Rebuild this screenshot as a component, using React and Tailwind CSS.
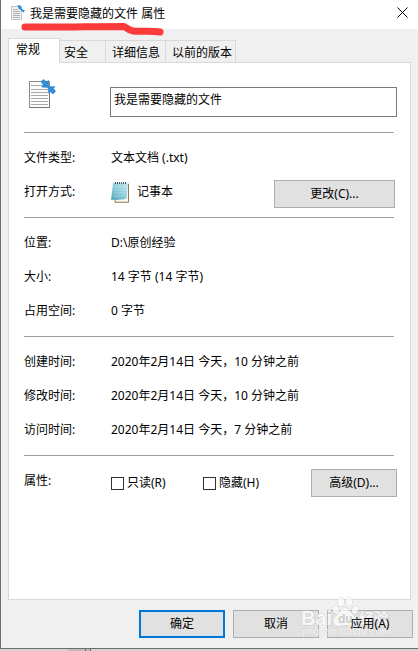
import React from 'react';

const FILE_NAME = '我是需要隐藏的文件';

const tabs = [
  { label: '安全', width: 'w-[46px] pl-1' },
  { label: '详细信息', width: 'w-[60px] pl-1.5' },
  { label: '以前的版本', width: 'w-[70px] pl-1.5' },
];

const sizeRows = [
  { label: '位置:', value: 'D:\\原创经验' },
  { label: '大小:', value: '14 字节 (14 字节)' },
  { label: '占用空间:', value: '0 字节' },
];

const timeRows = [
  { label: '创建时间:', value: '2020年2月14日 今天，10 分钟之前' },
  { label: '修改时间:', value: '2020年2月14日 今天，10 分钟之前' },
  { label: '访问时间:', value: '2020年2月14日 今天，7 分钟之前' },
];

function SmallFileIcon() {
  return (
    <svg className="w-3.5 h-[15px] mb-1" viewBox="0 0 14 15" fill="none" aria-hidden="true">
      <path d="M.5 1.500h10v13H.5z" fill="#f2f2f2" stroke="#c4c4c4" />
      <path d="M2 4.500h5M2 6.500h7M2 8.500h7M2 10.500h7M2 12.500h7" stroke="#a8b0b6" />
      <path d="M6.500 0L10 .8l.8 3.200L14 5.500 12.500 7.500 9.500 5 7.500 3.500z" fill="#2f8fdc" />
    </svg>
  );
}

function FileIcon({ className }) {
  return (
    <svg className={className} viewBox="0 0 28 30" fill="none" aria-hidden="true">
      <path d="M1.500 2.500h20v26h-20z" fill="#fbfbfb" stroke="#8b8b8b" />
      <path d="M21.500 12v16.500h-20" stroke="#777" />
      <path d="M3 6.500h12M3 10.500h17M3 13.500h17M3 16.500h17M3 19.500h17M3 22.500h17M3 25.500h17" stroke="#a9a9a9" />
      <path d="M13 2.500L15.500.5l3 2.200L20.500 1.500l.3 7-7-.4 1.500-2z" fill="#2f8fdc" stroke="#1f72b8" strokeWidth=".5" />
      <path d="M20 7.500l7 .3-1.500 1.700 2 3-2.500 2.500-2.500-2.200-1.800 1.500z" fill="#2f8fdc" stroke="#1f72b8" strokeWidth=".5" />
    </svg>
  );
}

function NotepadIcon() {
  return (
    <svg className="w-5 h-[22px]" viewBox="0 0 20 22" fill="none" aria-hidden="true">
      <defs>
        <linearGradient id="pad" x1="0" y1="1" x2="1" y2="0">
          <stop offset="0" stopColor="#4fa6bb" />
          <stop offset=".55" stopColor="#8fcfdd" />
          <stop offset="1" stopColor="#cdeaf0" />
        </linearGradient>
      </defs>
      <path d="M4 3h13.500v18.300H4z" fill="#f8f6f0" stroke="#927b55" />
      <path d="M2 2h15l-1.500 15.500c-3 1.500-5 .5-8 1.200-3 .6-5-.2-7.500 0C.8 13 1.500 8 2 2z" fill="url(#pad)" />
      <path d="M3 6h12M3 9h12M2 12h12.500M2 15h12" stroke="#fff" strokeOpacity=".25" />
      <path d="M4.500 3V1M6.500 3V1M8.500 3V1M10.500 3V1M12.500 3V1M14.500 3V1" stroke="#4c5a60" />
    </svg>
  );
}

function Rule() {
  return <hr className="h-px border-0 bg-[#a0a0a0] mr-[3px]" />;
}

function Row({ label, children }) {
  return (
    <div className="flex items-center h-[34px]">
      <div className="w-[87px] shrink-0">{label}</div>
      <div className="flex-1 flex items-center">{children}</div>
    </div>
  );
}

function Button({ className, children }) {
  return (
    <button type="button" className={`h-7 shrink-0 bg-[#e1e1e1] text-center ${className}`}>
      <span className="relative z-20">{children}</span>
    </button>
  );
}

function Check({ label, className }) {
  return (
    <label className={`flex items-center gap-[3px] ${className}`}>
      <input type="checkbox" className="appearance-none size-[13px] bg-white border border-[#333] checked:bg-[#333]" />
      <span>{label}</span>
    </label>
  );
}

function Watermark() {
  return (
    <div className="absolute z-10 right-[25px] bottom-2.5 pointer-events-none opacity-70" aria-hidden="true">
      <svg className="w-[92px] h-[42px]" viewBox="0 0 92 42" fill="#fff" stroke="#c4c4c4" strokeWidth="1" style={{ paintOrder: 'stroke' }}>
        <ellipse cx="35" cy="14" rx="3" ry="4" transform="rotate(-20 35 14)" />
        <ellipse cx="40" cy="6" rx="3" ry="4.500" />
        <ellipse cx="48" cy="6" rx="3" ry="4.500" />
        <ellipse cx="54" cy="14" rx="3" ry="4" transform="rotate(20 54 14)" />
        <path d="M44 12c4 0 5 4 8 7s5 5 3 9-7 1-11 1-9 3-11-1 0-6 3-9 4-7 8-7z" />
        <text x="0" y="29" fontSize="20" fontWeight="700" fontFamily="Liberation Sans, sans-serif">Bai</text>
        <text x="37" y="27" fontSize="12" fontWeight="700" fill="#c4c4c4" stroke="none" fontFamily="Liberation Sans, sans-serif">du</text>
        <text x="58" y="28" fontSize="15" fontWeight="700" fontFamily="Noto Sans CJK SC, sans-serif">经验</text>
        <text x="1" y="39" fontSize="11" strokeWidth=".6" fontFamily="Liberation Sans, sans-serif">jingyan.baidu.com</text>
      </svg>
    </div>
  );
}

function App() {
  return (
    <div
      lang="zh-CN"
      className="min-h-screen flex flex-col bg-[#d2d2d2] text-xs leading-4 text-black font-['Noto_Sans','Noto_Sans_CJK_SC',sans-serif]"
    >
      <div className="relative flex-1 flex flex-col bg-[#f0f0f0] border-l border-b border-[#6d6d6d]">
        <header className="relative flex items-center h-[29px] pl-2.5 pr-2 bg-white">
          <SmallFileIcon />
          <h1 className="ml-[5px] mb-0.5 flex-1">{FILE_NAME} 属性</h1>
          <button type="button" aria-label="关闭" className="p-0.5 mb-1">
            <svg className="size-[11px]" viewBox="0 0 11 11" fill="none" stroke="#000">
              <path d="M.5.5l10 10M10.500.5l-10 10" />
            </svg>
          </button>
          <svg className="absolute left-5 top-5 w-[150px] h-5" viewBox="0 0 150 20" fill="none" aria-hidden="true">
            <path
              d="M4 7c35 .5 66-.5 99-.5 3 1 4 4 9 4.500 10 .8 18-.8 27 1"
              stroke="#fb3a3a"
              strokeWidth="7"
              strokeLinecap="round"
              strokeLinejoin="round"
            />
          </svg>
        </header>

        <main className="flex-1 flex flex-col pt-[9px] px-[7px]">
          <div role="tablist" className="flex items-end">
            <button
              type="button"
              role="tab"
              aria-selected="true"
              className="relative z-10 -mb-px h-[25px] w-[52px] pl-[7px] pb-0.5 text-left bg-white border border-b-0 border-[#d9d9d9]"
            >
              常规
            </button>
            {tabs.map((tab) => (
              <button
                key={tab.label}
                type="button"
                role="tab"
                aria-selected="false"
                className={`h-[22px] pt-0.5 text-left whitespace-nowrap bg-[#f0f0f0] border-t border-r border-[#d9d9d9] ${tab.width}`}
              >
                {tab.label}
              </button>
            ))}
          </div>

          <section className="flex-1 bg-white border border-[#d9d9d9] pl-[15px] pr-[13px]">
            <div className="flex h-[69px] pt-4">
              <FileIcon className="ml-1 w-7 h-[30px] shrink-0" />
              <input
                type="text"
                aria-label="文件名"
                defaultValue={FILE_NAME}
                className="ml-[54px] mt-2 flex-1 min-w-0 h-[30px] pl-[3px] pb-1.5 bg-white border border-[#7a7a7a] outline-none"
              />
            </div>

            <Rule />
            <div className="py-2">
              <Row label="文件类型:">文本文档 (.txt)</Row>
              <Row label="打开方式:">
                <NotepadIcon />
                <span className="ml-1.5 flex-1">记事本</span>
                <Button className="w-[121px] mt-1 mr-0.5 border border-[#adadad]">更改(C)...</Button>
              </Row>
            </div>

            <Rule />
            <div className="py-2">
              {sizeRows.map((row) => (
                <Row key={row.label} label={row.label}>{row.value}</Row>
              ))}
            </div>

            <Rule />
            <div className="py-2">
              {timeRows.map((row) => (
                <Row key={row.label} label={row.label}>{row.value}</Row>
              ))}
            </div>

            <Rule />
            <div className="py-2">
              <Row label="属性:">
                <Check label="只读(R)" className="w-[92px] mt-1" />
                <Check label="隐藏(H)" className="flex-1 mt-1" />
                <Button className="w-[86px] mt-1 border border-[#adadad]">高级(D)...</Button>
              </Row>
            </div>
          </section>
        </main>

        <footer className="flex justify-end gap-2 pt-2.5 pb-2.5 pr-[5px]">
          <Button className="w-[86px] border-2 border-[#0078d7]">确定</Button>
          <Button className="w-[86px] border border-[#adadad]">取消</Button>
          <Button className="w-[86px] border border-[#adadad]">应用(A)</Button>
        </footer>
        <Watermark />
      </div>
      <div className="flex h-0.5">
        <div className="w-[68px]" />
        <div className="w-[23px] bg-[#bdbdbd] border-r border-[#6d6d6d] flex justify-end pr-1">
          <div className="w-px bg-[#6d6d6d]" />
        </div>
      </div>
    </div>
  );
}

export default App;
